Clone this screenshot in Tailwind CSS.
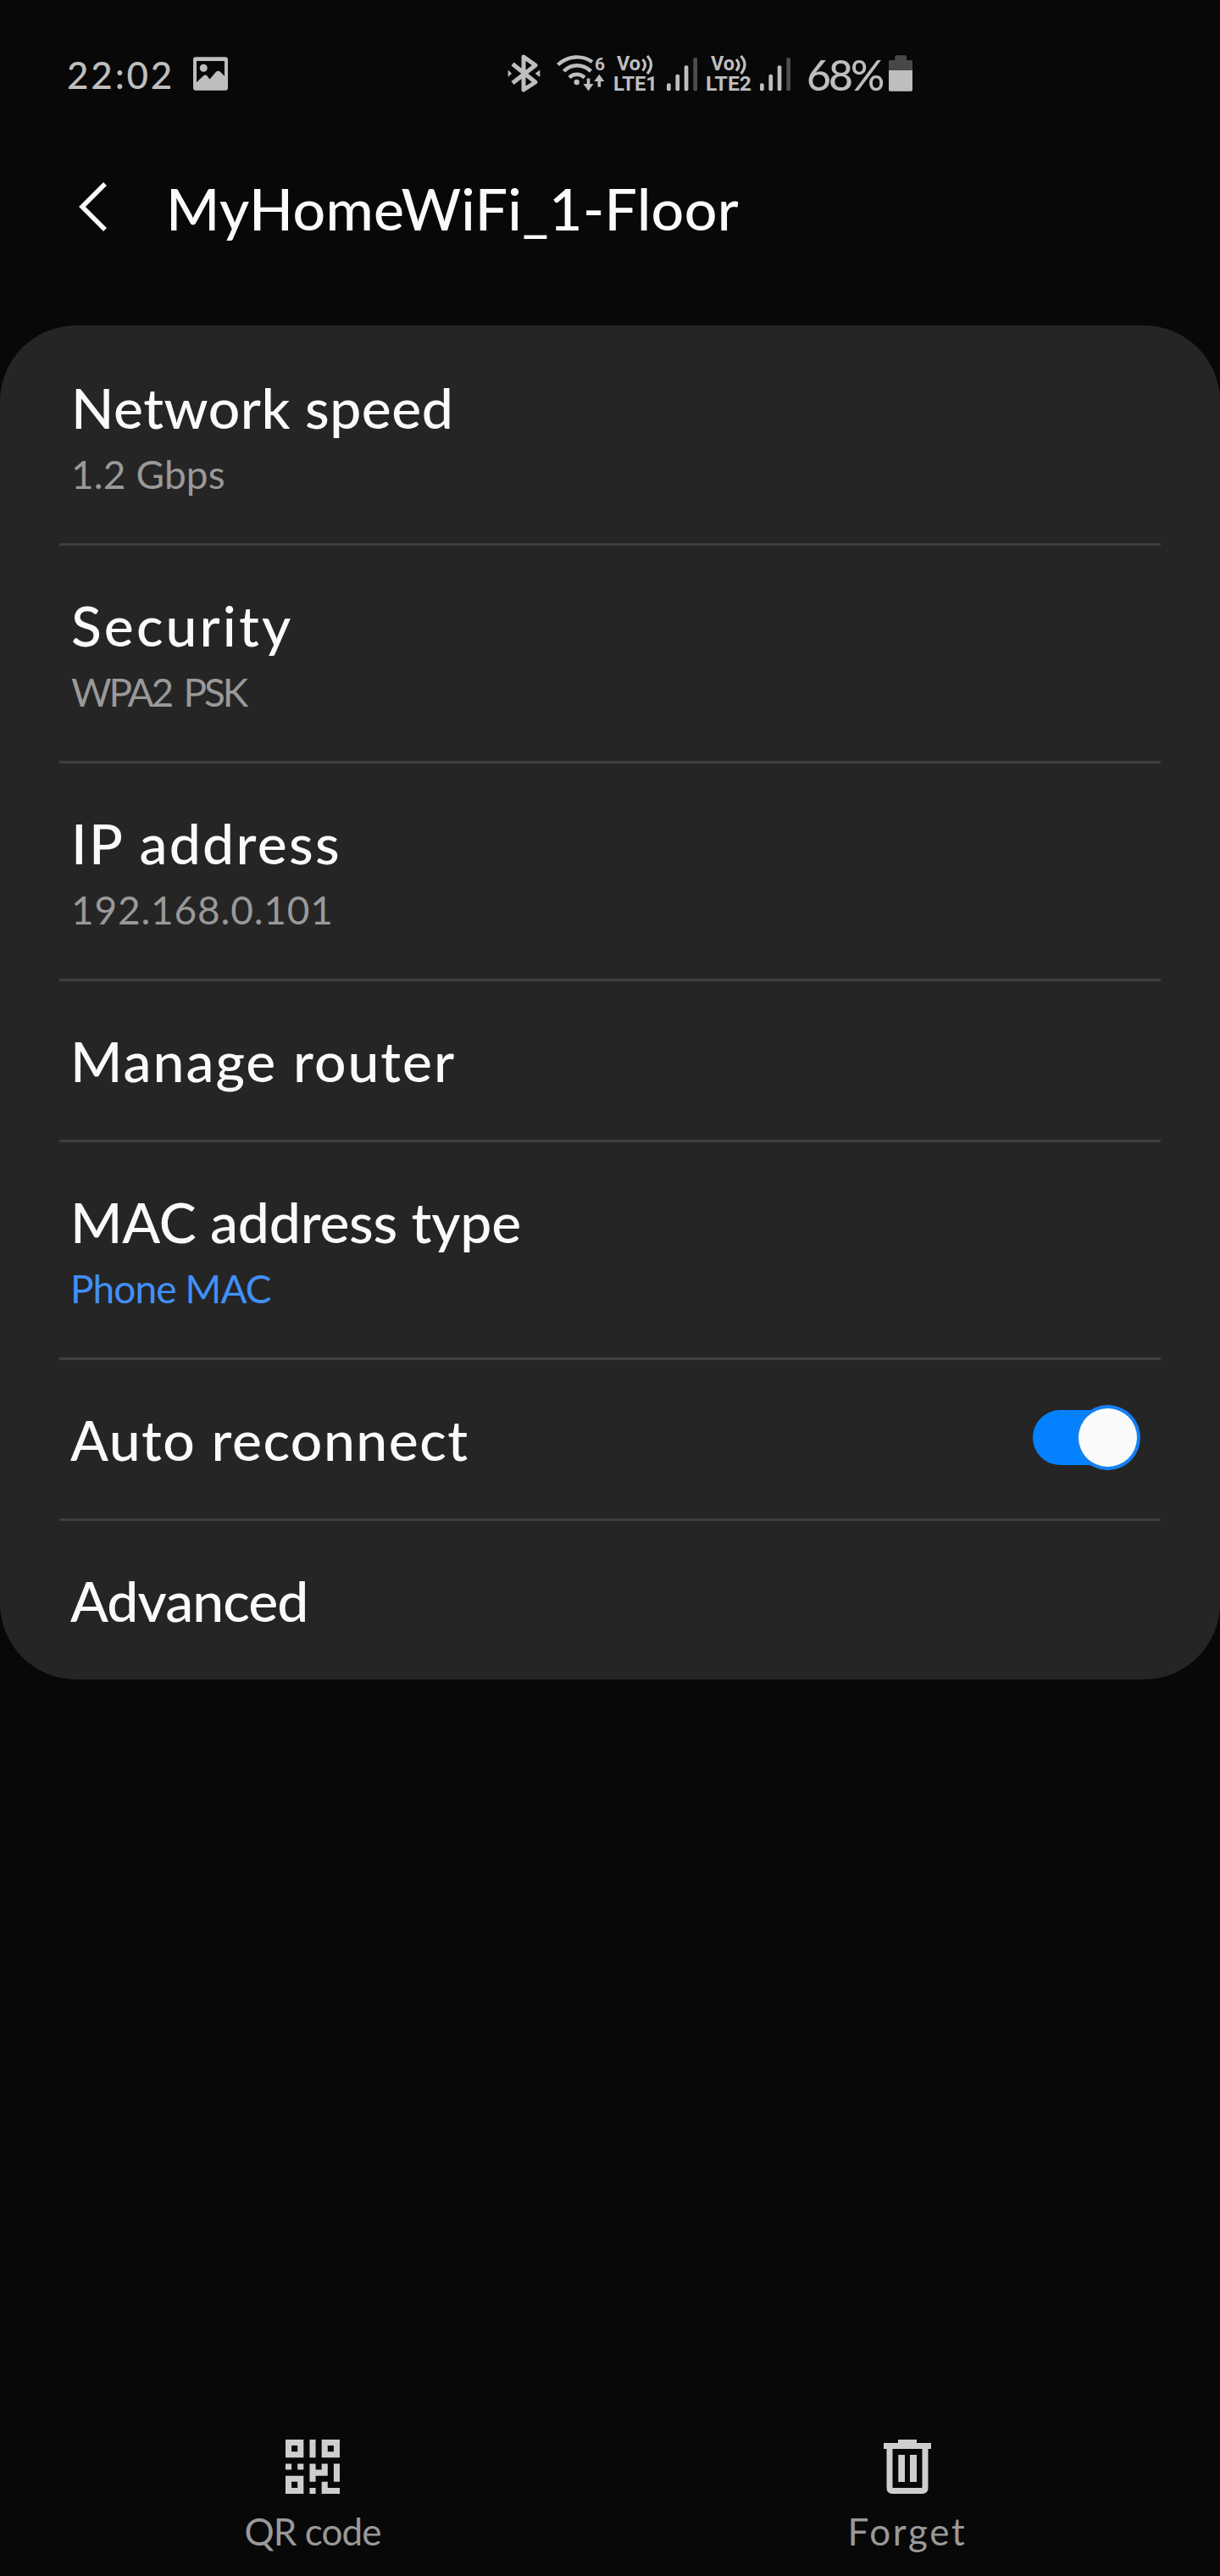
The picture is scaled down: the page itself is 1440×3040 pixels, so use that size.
<!DOCTYPE html>
<html lang="en">
<head>
    <meta charset="UTF-8">
    <meta name="viewport" content="width=device-width, initial-scale=1.0">
    <title>MyHomeWiFi_1-Floor</title>
    <script src="https://cdn.jsdelivr.net/npm/@tailwindcss/browser@4"></script>
</head>
<body class="bg-[#080808] text-[#fafafa] font-['Lato','Open_Sans',sans-serif] w-[1440px] h-[3040px] flex flex-col overflow-hidden whitespace-nowrap">

    <!-- Status bar -->
    <div class="flex items-center h-[176px] pl-[79px] text-[#bebebe] shrink-0">
        <span class="w-[149px] text-[44px] tracking-[2.8px] font-medium">22:02</span>
        <svg class="w-[41px] h-12" viewBox="0 0 41 48" fill="currentColor">
            <path fill-rule="evenodd" d="M3 3.3h35a3 3 0 0 1 3 3v33.4a3 3 0 0 1-3 3H3a3 3 0 0 1-3-3V6.300a3 3 0 0 1 3-3zM4 8v25l8.300-7.800q2-1.500 4 0l3.200 4.300 7.500-8.800q2.500-2 5 0l5 5V8z"/>
            <circle cx="12.300" cy="16.300" r="4.500"/>
        </svg>

        <!-- Bluetooth -->
        <svg class="w-[39px] h-12 ml-[330px]" viewBox="0 0 39 48" fill="none" stroke="currentColor" stroke-width="5" stroke-linejoin="round">
            <path d="M6 11.500L33 33 19 42V3l14 10L6 34"/>
            <path d="M.7 18.500L5 22.700.7 27zM38.300 18.500l-5.600 4.200 5.600 4.300z" fill="currentColor" stroke="none"/>
        </svg>

        <!-- Wi-Fi 6 -->
        <svg class="w-[57px] h-12 ml-[19px]" viewBox="0 0 57 48" fill="none" stroke="currentColor" stroke-width="4.400">
            <path d="M1.500 12.500C13 1.500 30 .5 42 9M8.500 20c9-9 22-9 32 0M15 27.500c5-5 12.500-5 18 0"/>
            <path d="M37.500 28.500v11M50.300 28v10.500" stroke-width="3.600"/>
            <path d="M31.500 35h12l-6 8.200zM44.300 32h12l-6-8.200z" fill="currentColor" stroke="none"/>
            <circle cx="23.700" cy="33" r="3.200" fill="currentColor" stroke="none"/>
            <text x="45" y="18.500" font-family="Roboto, sans-serif" font-weight="700" font-size="21" fill="currentColor" stroke="none">6</text>
        </svg>

        <!-- SIM 1 -->
        <svg class="w-[54px] h-14 ml-[9px]" viewBox="-2 -4 54 56" fill="currentColor" font-family="Roboto, sans-serif" font-weight="700">
            <text x="3" y="19.300" font-size="23.500" textLength="28" lengthAdjust="spacingAndGlyphs">Vo</text>
            <path d="M33.500 6q6 6.500 0 13.500M39 2q9 10 0 21" fill="none" stroke="currentColor" stroke-width="3.200"/>
            <text x="-1" y="43" font-size="24.500" textLength="52" lengthAdjust="spacingAndGlyphs">LTE1</text>
        </svg>
        <svg class="w-9 h-12 ml-[10px]" viewBox="0 0 36 48" fill="currentColor">
            <rect x="0" y="34.300" width="4.700" height="9" rx="2"/>
            <rect x="10.400" y="23.700" width="4.700" height="19.600" rx="2"/>
            <rect x="20.700" y="13.300" width="4.700" height="30" rx="2"/>
            <rect x="31.300" y="4" width="4.700" height="39.300" rx="2" fill="#4d4d4d"/>
        </svg>

        <!-- SIM 2 -->
        <svg class="w-[56px] h-14 ml-[9px]" viewBox="-2 -4 56 56" fill="currentColor" font-family="Roboto, sans-serif" font-weight="700">
            <text x="5" y="19.300" font-size="23.500" textLength="28" lengthAdjust="spacingAndGlyphs">Vo</text>
            <path d="M35 6q6 6.500 0 13.500M40.500 2q9 10 0 21" fill="none" stroke="currentColor" stroke-width="3.200"/>
            <text x="-1" y="43" font-size="24.500" textLength="54" lengthAdjust="spacingAndGlyphs">LTE2</text>
        </svg>
        <svg class="w-9 h-12 ml-[9px]" viewBox="0 0 36 48" fill="currentColor">
            <rect x="0" y="34.300" width="4.700" height="9" rx="2"/>
            <rect x="10.400" y="23.700" width="4.700" height="19.600" rx="2"/>
            <rect x="20.700" y="13.300" width="4.700" height="30" rx="2"/>
            <rect x="31.300" y="4" width="4.700" height="39.300" rx="2" fill="#4d4d4d"/>
        </svg>

        <span class="w-[97px] ml-[19px] text-[50px] tracking-[-3px] font-medium">68%</span>
        <svg class="w-7 h-12" viewBox="0 0 28 48">
            <path d="M9 1.300h10.500q1.500 0 1.500 1.500V7h5.500Q28 7 28 8.500V19H0V8.500Q0 7 1.500 7h5.800V2.800q0-1.500 1.700-1.500z" fill="#484848"/>
            <path d="M0 19h28v23q0 1.700-1.700 1.700H1.700Q0 43.700 0 42z" fill="#bebebe"/>
        </svg>
    </div>

    <!-- Title bar -->
    <div class="flex items-center h-[140px] mb-[68px] pl-[92px] shrink-0">
        <svg class="w-9 h-[60px] mb-1" viewBox="0 0 36 60" fill="none" stroke="currentColor" stroke-width="5.500">
            <path d="M32 3L5 30l27 27"/>
        </svg>
        <h1 class="ml-[68px] text-[68px] tracking-[0.4px] font-medium">MyHomeWiFi_1-Floor</h1>
    </div>

    <!-- Settings list -->
    <div class="flex flex-col bg-[#252525] rounded-[90px] h-[1598px] pt-[3px] px-[70px] shrink-0">
        <div class="h-[257px] border-b-3 border-[#3f3f3f] pt-[53px] pl-[14px]">
            <p class="text-[66px] leading-[81px] tracking-[0.5px] font-medium">Network speed</p>
            <p class="text-[46px] leading-[56px] mt-[11px] tracking-[0.1px] text-[#999999]">1.2 Gbps</p>
        </div>
        <div class="h-[257px] border-b-3 border-[#3f3f3f] pt-[53px] pl-[14px]">
            <p class="text-[66px] leading-[81px] tracking-[3.1px] font-medium">Security</p>
            <p class="text-[46px] leading-[56px] mt-[11px] tracking-[-3.2px] [word-spacing:6px] text-[#999999]">WPA2 PSK</p>
        </div>
        <div class="h-[257px] border-b-3 border-[#3f3f3f] pt-[53px] pl-[14px]">
            <p class="text-[66px] leading-[81px] tracking-[2.3px] font-medium">IP address</p>
            <p class="text-[46px] leading-[56px] mt-[11px] tracking-[0.8px] text-[#999999]">192.168.0.101</p>
        </div>
        <div class="h-[190px] border-b-3 border-[#3f3f3f] pt-[53px] pl-[13px]">
            <p class="text-[66px] leading-[81px] tracking-[2px] font-medium">Manage router</p>
        </div>
        <div class="h-[257px] border-b-3 border-[#3f3f3f] pt-[53px] pl-[13px]">
            <p class="text-[66px] leading-[81px] tracking-[-0.2px] font-medium">MAC address type</p>
            <p class="text-[46px] leading-[56px] mt-[11px] tracking-[-0.9px] text-[#4190f7]">Phone MAC</p>
        </div>
        <div class="flex justify-between items-start h-[190px] border-b-3 border-[#3f3f3f] pt-[53px] pl-[13px] pr-6">
            <p class="text-[66px] leading-[81px] tracking-[1.5px] font-medium">Auto reconnect</p>
            <svg class="w-[127px] h-[77px]" viewBox="0 0 127 77">
                <rect x="0" y="6" width="121" height="65" rx="32.500" fill="#0381fe"/>
                <circle cx="88.500" cy="38.500" r="38.500" fill="#1480f2"/>
                <circle cx="88.500" cy="38.500" r="34.500" fill="#fafafa"/>
            </svg>
        </div>
        <div class="h-[187px] pt-[53px] pl-[13px]">
            <p class="text-[66px] leading-[81px] tracking-[-0.9px] font-medium">Advanced</p>
        </div>
    </div>

    <!-- Bottom actions -->
    <div class="flex mt-auto pl-[18px] h-[161px] text-[#999999] shrink-0">
        <div class="flex flex-col items-center w-[702px]">
            <svg class="w-16 h-16 text-[#cecece]" viewBox="0 0 9 9" fill="currentColor">
                <path fill-rule="evenodd" d="M0 0h3v3H0zM1 1v1h1V1zM6 0h3v3H6zM7 1v1h1V1zM0 6h3v3H0zM1 7v1h1V7z"/>
                <path d="M4 0h1v3H4zM0 4h1v1H0zM2 4h1v1H2zM4 4h1v1h1V4h1v2H5v1H4zM8 4h1v3H8zM4 8h1v1H4zM6 7h1v1h2v1H6z"/>
            </svg>
            <span class="mt-4 text-[44px] leading-[56px] tracking-[-0.9px]">QR code</span>
        </div>
        <div class="flex flex-col items-center w-[702px]">
            <svg class="w-14 h-16 text-[#cecece]" viewBox="0 0 56 64" fill="currentColor">
                <path d="M17 0h22v4h17v7H0V4h17z"/>
                <path d="M7 10v47q0 3.500 3.500 3.500h35q3.500 0 3.500-3.500V10" fill="none" stroke="currentColor" stroke-width="7"/>
                <path d="M17.300 18H25v32h-7.700zM31 18h8v32h-8z"/>
            </svg>
            <span class="mt-4 text-[44px] leading-[56px] tracking-[2.7px]">Forget</span>
        </div>
    </div>

</body>
</html>
